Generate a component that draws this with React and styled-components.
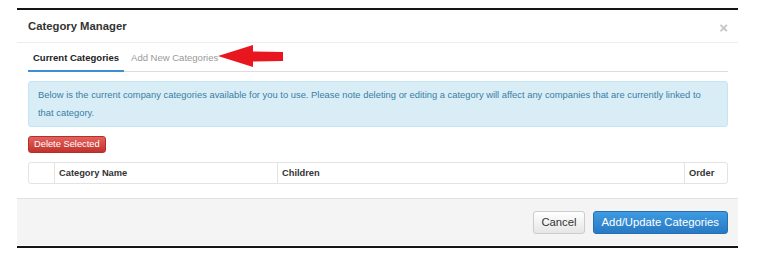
import React from "react";
import styled, { createGlobalStyle } from "styled-components";

const GlobalStyle = createGlobalStyle`
  body {
    margin: 0;
    background: #ffffff;
    font-family: "Liberation Sans", Arial, sans-serif;
    color: #333333;
  }
`;

const Page = styled.div`
  padding: 8px 0 0 17px;
  width: 721px;
`;

const Modal = styled.div`
  border-top: 2px solid #151515;
  border-bottom: 2px solid #151515;
  background: #ffffff;
`;

const Header = styled.div`
  display: flex;
  justify-content: space-between;
  align-items: center;
  height: 32px;
  padding: 0 10px 0 11px;
  border-bottom: 1px solid #ececec;
`;

const Title = styled.h4`
  margin: 0;
  font-size: 11.3px;
  font-weight: bold;
  color: #333333;
`;

const Close = styled.span`
  font-size: 15px;
  font-weight: bold;
  color: #c4c4c4;
  line-height: 1;
  margin-top: 2px;
`;

const Body = styled.div`
  padding: 0 10px 0 11px;
`;

const TabRow = styled.div`
  display: flex;
  align-items: center;
  height: 28px;
  border-bottom: 1px solid #dddddd;
`;

const Tab = styled.div`
  display: flex;
  align-items: center;
  height: 100%;
  box-sizing: border-box;
  padding: 2px 5px 0;
  margin-bottom: -1px;
  font-size: 9.5px;
  font-weight: ${(p) => (p.$active ? "bold" : "normal")};
  color: ${(p) => (p.$active ? "#222222" : "#999999")};
  border-bottom: 2px solid ${(p) => (p.$active ? "#3d8fd3" : "transparent")};
  margin-right: ${(p) => (p.$active ? "2px" : "0")};
`;

const Arrow = styled.svg`
  display: block;
  margin-left: -5px;
  margin-top: -2px;
`;

const Alert = styled.div`
  margin-top: 9px;
  padding: 4px 9px;
  background: #d9edf7;
  border: 1px solid #c4e5f2;
  border-radius: 3px;
  color: #3a7ea3;
  font-size: 9.4px;
  line-height: 18px;
`;

const DangerButton = styled.button`
  display: block;
  margin-top: 9px;
  height: 17px;
  padding: 0 5px;
  border: 1px solid #b72d29;
  border-radius: 3px;
  background: linear-gradient(#e3625d, #c2322d);
  color: #ffffff;
  font-family: inherit;
  font-size: 9.3px;
  line-height: 15px;
`;

const Table = styled.div`
  display: grid;
  grid-template-columns: 25px 223px 1fr 43px;
  margin-top: 9px;
  border: 1px solid #e3e3e3;
  border-radius: 3px;
  height: 22px;
  box-sizing: border-box;
`;

const HeadCell = styled.div`
  display: flex;
  align-items: center;
  padding-left: 4px;
  border-left: ${(p) => (p.$first ? "none" : "1px solid #e3e3e3")};
  font-size: 9.3px;
  font-weight: bold;
  color: #333333;
`;

const Footer = styled.div`
  display: flex;
  justify-content: flex-end;
  align-items: center;
  gap: 8px;
  margin-top: 14px;
  height: 46px;
  padding-right: 10px;
  background: #f4f4f4;
  border-top: 1px solid #e2e2e2;
  border-bottom: 1px solid #ffffff;
`;

const Button = styled.button`
  height: 23px;
  padding: 0 ${(p) => (p.$primary ? "8px" : "7px")};
  border-radius: 3px;
  border: 1px solid ${(p) => (p.$primary ? "#2a6eb0" : "#cccccc")};
  background: ${(p) =>
    p.$primary
      ? "linear-gradient(#3e9be2, #2879c3)"
      : "linear-gradient(#ffffff, #e6e6e6)"};
  color: ${(p) => (p.$primary ? "#ffffff" : "#333333")};
  font-family: inherit;
  font-size: 11.3px;
`;

const App = () => {
  return (
    <>
      <GlobalStyle />
      <Page>
        <Modal>
          <Header>
            <Title>Category Manager</Title>
            <Close>×</Close>
          </Header>
          <Body>
            <TabRow>
              <Tab $active>Current Categories</Tab>
              <Tab>Add New Categories</Tab>
              <Arrow width="66" height="22" viewBox="0 0 66 22">
                <path
                  d="M0 11 L35 0 L35 6.5 L65 7 L65 16 L35 16.5 L35 22 Z"
                  fill="#e8161e"
                />
              </Arrow>
            </TabRow>
            <Alert>
              Below is the current company categories available for you to use.
              Please note deleting or editing a category will affect any
              companies that are currently linked to that category.
            </Alert>
            <DangerButton>Delete Selected</DangerButton>
            <Table>
              <HeadCell $first />
              <HeadCell>Category Name</HeadCell>
              <HeadCell>Children</HeadCell>
              <HeadCell>Order</HeadCell>
            </Table>
          </Body>
          <Footer>
            <Button>Cancel</Button>
            <Button $primary>Add/Update Categories</Button>
          </Footer>
        </Modal>
      </Page>
    </>
  );
};

export default App;
